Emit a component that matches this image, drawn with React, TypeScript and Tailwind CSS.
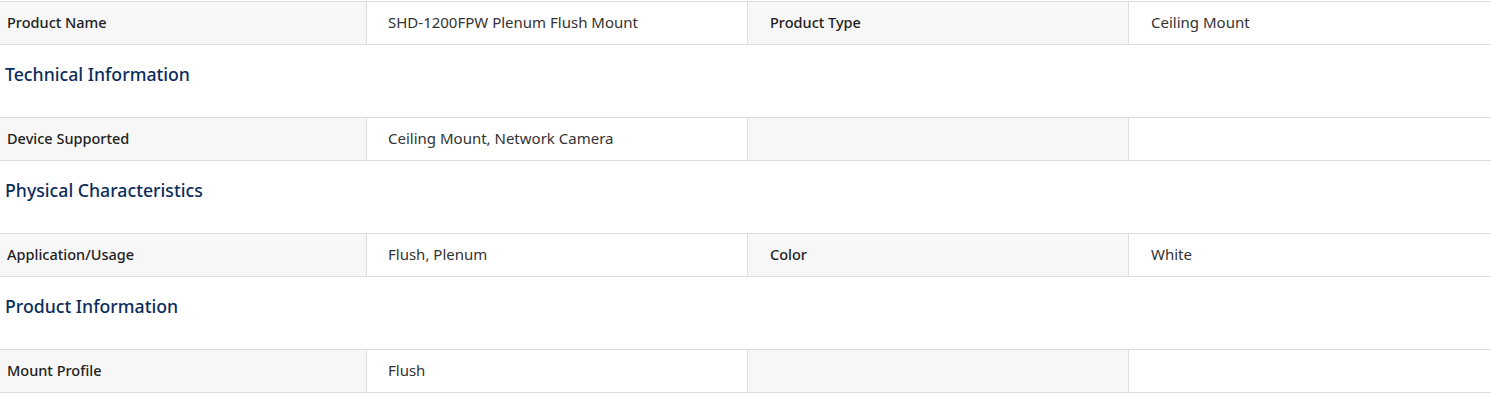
const sections: { title?: string; row: [string, string, string, string] }[] = [
  { row: ["Product Name", "SHD-1200FPW Plenum Flush Mount", "Product Type", "Ceiling Mount"] },
  { title: "Technical Information", row: ["Device Supported", "Ceiling Mount, Network Camera", "", ""] },
  { title: "Physical Characteristics", row: ["Application/Usage", "Flush, Plenum", "Color", "White"] },
  { title: "Product Information", row: ["Mount Profile", "Flush", "", ""] },
];

function SpecRow({ row }: { row: [string, string, string, string] }) {
  return (
    <div className="grid grid-cols-[366px_381px_381px_1fr] border-y border-[#dddddd] h-[44px] leading-[20px]">
      <div className="bg-[#f7f7f7] flex items-center pl-[7px] pb-[2px] text-[14.5px] font-medium text-[#222222]">{row[0]}</div>
      <div className="flex items-center pl-[21px] pb-[2px] border-l border-[#dddddd] text-[15px] text-[#333333]">{row[1]}</div>
      <div className="bg-[#f7f7f7] flex items-center pl-[22px] pb-[2px] border-l border-[#dddddd] text-[14.5px] font-medium text-[#222222]">{row[2]}</div>
      <div className="flex items-center pl-[22px] pb-[2px] border-l border-[#dddddd] text-[15px] text-[#333333]">{row[3]}</div>
    </div>
  );
}

export default function App() {
  return (
    <div className="w-[1491px] h-[394px] bg-white pt-px overflow-hidden" style={{ fontFamily: '"Noto Sans", sans-serif' }}>
      {sections.map((s, i) => (
        <div key={i}>
          {s.title && (
            <div className="h-[72px] pt-[15px] pl-[5px]">
              <h2 className="text-[17.7px] leading-[28px] font-medium text-[#0b2d5b]">{s.title}</h2>
            </div>
          )}
          <SpecRow row={s.row} />
        </div>
      ))}
    </div>
  );
}
